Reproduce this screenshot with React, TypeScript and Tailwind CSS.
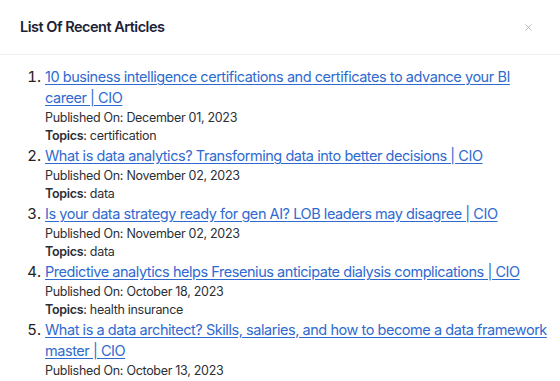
import { X } from "lucide-react";

// ============================================
// Data
// ============================================

interface Article {
  title: string;
  publishedOn: string;
  topics?: string;
}

const articles: Article[] = [
  {
    title:
      "10 business intelligence certifications and certificates to advance your BI career | CIO",
    publishedOn: "December 01, 2023",
    topics: "certification",
  },
  {
    title: "What is data analytics? Transforming data into better decisions | CIO",
    publishedOn: "November 02, 2023",
    topics: "data",
  },
  {
    title: "Is your data strategy ready for gen AI? LOB leaders may disagree | CIO",
    publishedOn: "November 02, 2023",
    topics: "data",
  },
  {
    title: "Predictive analytics helps Fresenius anticipate dialysis complications | CIO",
    publishedOn: "October 18, 2023",
    topics: "health insurance",
  },
  {
    title:
      "What is a data architect? Skills, salaries, and how to become a data framework master | CIO",
    publishedOn: "October 13, 2023",
    topics: "data architecture",
  },
];

// ============================================
// Main Component
// ============================================

export default function App() {
  return (
    <div
      className="w-[560px] h-[381px] overflow-hidden bg-white text-[#1f2937]"
      style={{ fontFamily: "Inter, 'Noto Sans', sans-serif" }}
    >
      {/* Header */}
      <div className="h-[55px] flex items-center justify-between pl-5 pr-[26px] border-b border-[#f1f2f4]">
        <h2 className="text-[14.5px] font-semibold text-[#1a2236] tracking-[-0.5px]">
          List Of Recent Articles
        </h2>
        <button className="text-[#9aa0ab]">
          <X className="h-[11px] w-[11px]" strokeWidth={1.6} />
        </button>
      </div>

      {/* List */}
      <ol className="list-decimal pl-[45px] pr-[8px] pt-[11px] text-[#2b2f36]">
        {articles.map((article) => (
          <li key={article.title} className="marker:text-[15px] marker:text-[#222]">
            <a
              href="#"
              className="block text-[14.5px] leading-[21px] text-[#2f6ad0] underline underline-offset-2 tracking-[-0.45px]"
            >
              {article.title}
            </a>
            <p className="text-[12.5px] leading-[19px] tracking-[-0.3px]">
              Published On: {article.publishedOn}
            </p>
            {article.topics && (
              <p className="text-[12.5px] leading-[18px] tracking-[-0.3px]">
                <span className="font-semibold">Topics</span>: {article.topics}
              </p>
            )}
          </li>
        ))}
      </ol>
    </div>
  );
}
